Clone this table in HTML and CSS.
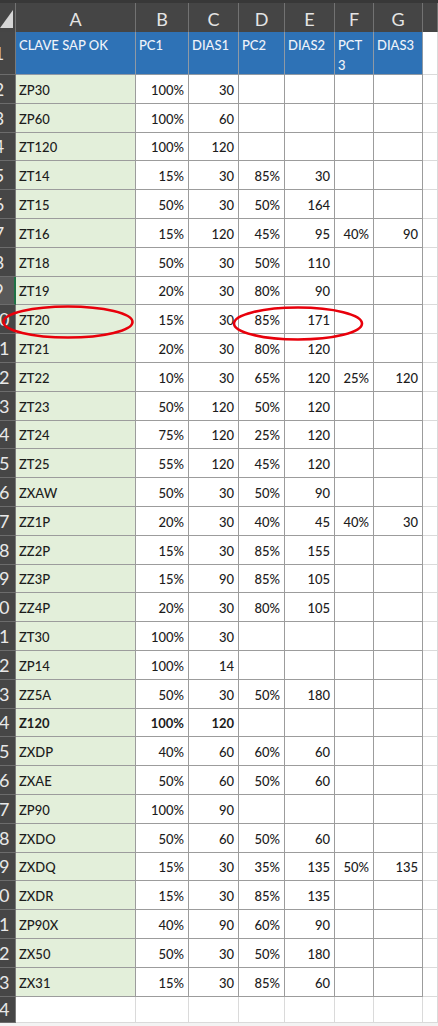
FILE: index.html
```html
<!DOCTYPE html>
<html>
<head>
<meta charset="utf-8">
<link rel="stylesheet" href="styles.css">
</head>
<body>
<div class="wrap">
<div class="sheet">
  <div class="row colhead">
    <div class="corner"><svg width="13" height="18" viewBox="0 0 13 18"><polygon points="0,18 13,0 13,18" fill="#d6d6d6"/></svg></div>
    <div class="ch">A</div><div class="ch">B</div><div class="ch">C</div><div class="ch">D</div><div class="ch">E</div><div class="ch">F</div><div class="ch">G</div><div class="ch"></div>
  </div>
  <div class="row hdr">
    <div class="rh">1</div>
    <div class="c h">CLAVE SAP OK</div><div class="c h">PC1</div><div class="c h">DIAS1</div><div class="c h">PC2</div><div class="c h">DIAS2</div><div class="c h"><span class="mc">PCT 3</span></div><div class="c h">DIAS3</div><div class="c x"></div>
  </div>
  <div class="row"><div class="rh">2</div><div class="c a">ZP30</div><div class="c n">100%</div><div class="c n">30</div><div class="c n"></div><div class="c n"></div><div class="c n"></div><div class="c n"></div><div class="c x"></div></div>
  <div class="row"><div class="rh">3</div><div class="c a">ZP60</div><div class="c n">100%</div><div class="c n">60</div><div class="c n"></div><div class="c n"></div><div class="c n"></div><div class="c n"></div><div class="c x"></div></div>
  <div class="row"><div class="rh">4</div><div class="c a">ZT120</div><div class="c n">100%</div><div class="c n">120</div><div class="c n"></div><div class="c n"></div><div class="c n"></div><div class="c n"></div><div class="c x"></div></div>
  <div class="row"><div class="rh">5</div><div class="c a">ZT14</div><div class="c n">15%</div><div class="c n">30</div><div class="c n">85%</div><div class="c n">30</div><div class="c n"></div><div class="c n"></div><div class="c x"></div></div>
  <div class="row"><div class="rh">6</div><div class="c a">ZT15</div><div class="c n">50%</div><div class="c n">30</div><div class="c n">50%</div><div class="c n">164</div><div class="c n"></div><div class="c n"></div><div class="c x"></div></div>
  <div class="row"><div class="rh">7</div><div class="c a">ZT16</div><div class="c n">15%</div><div class="c n">120</div><div class="c n">45%</div><div class="c n">95</div><div class="c n">40%</div><div class="c n">90</div><div class="c x"></div></div>
  <div class="row"><div class="rh">8</div><div class="c a">ZT18</div><div class="c n">50%</div><div class="c n">30</div><div class="c n">50%</div><div class="c n">110</div><div class="c n"></div><div class="c n"></div><div class="c x"></div></div>
  <div class="row"><div class="rh active">9</div><div class="c a">ZT19</div><div class="c n">20%</div><div class="c n">30</div><div class="c n">80%</div><div class="c n">90</div><div class="c n"></div><div class="c n"></div><div class="c x"></div></div>
  <div class="row"><div class="rh">10</div><div class="c a">ZT20</div><div class="c n">15%</div><div class="c n">30</div><div class="c n">85%</div><div class="c n">171</div><div class="c n"></div><div class="c n"></div><div class="c x"></div></div>
  <div class="row"><div class="rh">11</div><div class="c a">ZT21</div><div class="c n">20%</div><div class="c n">30</div><div class="c n">80%</div><div class="c n">120</div><div class="c n"></div><div class="c n"></div><div class="c x"></div></div>
  <div class="row"><div class="rh">12</div><div class="c a">ZT22</div><div class="c n">10%</div><div class="c n">30</div><div class="c n">65%</div><div class="c n">120</div><div class="c n">25%</div><div class="c n">120</div><div class="c x"></div></div>
  <div class="row"><div class="rh">13</div><div class="c a">ZT23</div><div class="c n">50%</div><div class="c n">120</div><div class="c n">50%</div><div class="c n">120</div><div class="c n"></div><div class="c n"></div><div class="c x"></div></div>
  <div class="row"><div class="rh">14</div><div class="c a">ZT24</div><div class="c n">75%</div><div class="c n">120</div><div class="c n">25%</div><div class="c n">120</div><div class="c n"></div><div class="c n"></div><div class="c x"></div></div>
  <div class="row"><div class="rh">15</div><div class="c a">ZT25</div><div class="c n">55%</div><div class="c n">120</div><div class="c n">45%</div><div class="c n">120</div><div class="c n"></div><div class="c n"></div><div class="c x"></div></div>
  <div class="row"><div class="rh">16</div><div class="c a">ZXAW</div><div class="c n">50%</div><div class="c n">30</div><div class="c n">50%</div><div class="c n">90</div><div class="c n"></div><div class="c n"></div><div class="c x"></div></div>
  <div class="row"><div class="rh">17</div><div class="c a">ZZ1P</div><div class="c n">20%</div><div class="c n">30</div><div class="c n">40%</div><div class="c n">45</div><div class="c n">40%</div><div class="c n">30</div><div class="c x"></div></div>
  <div class="row"><div class="rh">18</div><div class="c a">ZZ2P</div><div class="c n">15%</div><div class="c n">30</div><div class="c n">85%</div><div class="c n">155</div><div class="c n"></div><div class="c n"></div><div class="c x"></div></div>
  <div class="row"><div class="rh">19</div><div class="c a">ZZ3P</div><div class="c n">15%</div><div class="c n">90</div><div class="c n">85%</div><div class="c n">105</div><div class="c n"></div><div class="c n"></div><div class="c x"></div></div>
  <div class="row"><div class="rh">20</div><div class="c a">ZZ4P</div><div class="c n">20%</div><div class="c n">30</div><div class="c n">80%</div><div class="c n">105</div><div class="c n"></div><div class="c n"></div><div class="c x"></div></div>
  <div class="row"><div class="rh">21</div><div class="c a">ZT30</div><div class="c n">100%</div><div class="c n">30</div><div class="c n"></div><div class="c n"></div><div class="c n"></div><div class="c n"></div><div class="c x"></div></div>
  <div class="row"><div class="rh">22</div><div class="c a">ZP14</div><div class="c n">100%</div><div class="c n">14</div><div class="c n"></div><div class="c n"></div><div class="c n"></div><div class="c n"></div><div class="c x"></div></div>
  <div class="row"><div class="rh">23</div><div class="c a">ZZ5A</div><div class="c n">50%</div><div class="c n">30</div><div class="c n">50%</div><div class="c n">180</div><div class="c n"></div><div class="c n"></div><div class="c x"></div></div>
  <div class="row bold"><div class="rh">24</div><div class="c a">Z120</div><div class="c n">100%</div><div class="c n">120</div><div class="c n"></div><div class="c n"></div><div class="c n"></div><div class="c n"></div><div class="c x"></div></div>
  <div class="row"><div class="rh">25</div><div class="c a">ZXDP</div><div class="c n">40%</div><div class="c n">60</div><div class="c n">60%</div><div class="c n">60</div><div class="c n"></div><div class="c n"></div><div class="c x"></div></div>
  <div class="row"><div class="rh">26</div><div class="c a">ZXAE</div><div class="c n">50%</div><div class="c n">60</div><div class="c n">50%</div><div class="c n">60</div><div class="c n"></div><div class="c n"></div><div class="c x"></div></div>
  <div class="row"><div class="rh">27</div><div class="c a">ZP90</div><div class="c n">100%</div><div class="c n">90</div><div class="c n"></div><div class="c n"></div><div class="c n"></div><div class="c n"></div><div class="c x"></div></div>
  <div class="row"><div class="rh">28</div><div class="c a">ZXDO</div><div class="c n">50%</div><div class="c n">60</div><div class="c n">50%</div><div class="c n">60</div><div class="c n"></div><div class="c n"></div><div class="c x"></div></div>
  <div class="row"><div class="rh">29</div><div class="c a">ZXDQ</div><div class="c n">15%</div><div class="c n">30</div><div class="c n">35%</div><div class="c n">135</div><div class="c n">50%</div><div class="c n">135</div><div class="c x"></div></div>
  <div class="row"><div class="rh">30</div><div class="c a">ZXDR</div><div class="c n">15%</div><div class="c n">30</div><div class="c n">85%</div><div class="c n">135</div><div class="c n"></div><div class="c n"></div><div class="c x"></div></div>
  <div class="row"><div class="rh">31</div><div class="c a">ZP90X</div><div class="c n">40%</div><div class="c n">90</div><div class="c n">60%</div><div class="c n">90</div><div class="c n"></div><div class="c n"></div><div class="c x"></div></div>
  <div class="row"><div class="rh">32</div><div class="c a">ZX50</div><div class="c n">50%</div><div class="c n">30</div><div class="c n">50%</div><div class="c n">180</div><div class="c n"></div><div class="c n"></div><div class="c x"></div></div>
  <div class="row"><div class="rh">33</div><div class="c a">ZX31</div><div class="c n">15%</div><div class="c n">30</div><div class="c n">85%</div><div class="c n">60</div><div class="c n"></div><div class="c n"></div><div class="c x"></div></div>
  <div class="row last"><div class="rh">34</div><div class="c x"></div><div class="c x"></div><div class="c x"></div><div class="c x"></div><div class="c x"></div><div class="c x"></div><div class="c x"></div><div class="c x"></div></div>
</div>
<svg class="marks" width="438" height="1026" viewBox="0 0 438 1026">
  <ellipse cx="68" cy="322" rx="64.5" ry="15.5" fill="none" stroke="#e8000b" stroke-width="2.6"/>
  <ellipse cx="298" cy="323.5" rx="64" ry="16" fill="none" stroke="#e8000b" stroke-width="2.6"/>
</svg>
</div>
</body>
</html>
```

FILE: styles.css
```css
html, body {
  margin: 0;
  padding: 0;
  background: #ffffff;
  overflow: hidden;
}
.wrap {
  position: relative;
  width: 438px;
  height: 1026px;
  overflow: hidden;
  background: #f3f3f3;
}
.sheet {
  margin-left: -17px;
  width: 455px;
  font-family: Lato, "Open Sans", sans-serif;
  font-size: 13px;
  color: #1c1c1c;
}
.row {
  display: grid;
  grid-template-columns: 33px 120px 53px 50px 46px 50px 39px 49px 1fr;
  height: 28.8px;
}
.row > div {
  box-sizing: border-box;
  overflow: hidden;
  white-space: nowrap;
}
.colhead {
  height: 32px;
  background: #454545;
  border-top: 3px solid #383838;
  box-sizing: border-box;
}
.corner {
  display: flex;
  justify-content: flex-end;
  align-items: flex-end;
  padding: 0 2px 4px 0;
  border-right: 1px solid #727272;
}
.ch {
  display: flex;
  justify-content: center;
  align-items: center;
  padding-top: 2px;
  font-size: 18px;
  color: #e4e4e4;
  border-right: 1px solid #727272;
}
.hdr {
  height: 43px;
}
.rh {
  display: flex;
  justify-content: center;
  align-items: center;
  background: #464646;
  color: #e8e8e8;
  font-size: 18px;
  font-weight: 400;
  border-right: 1px solid #7a7a7a;
  border-bottom: 1px solid #6c6c6c;
}
.rh.active {
  background: #595959;
  border-right: 2px solid #1e7145;
}
.c {
  display: flex;
  align-items: flex-end;
  padding: 0 4px 5px 4px;
  line-height: 16px;
  font-weight: 500;
  background: #ffffff;
  border-right: 1px solid #9c9c9c;
  border-bottom: 1px solid #9c9c9c;
}
.c.a {
  background: #e3efda;
  padding-left: 3px;
}
.c.n {
  justify-content: flex-end;
}
.c.h {
  align-items: flex-start;
  padding: 3px 4px 0 3px;
  line-height: 20px;
  background: #2e72b6;
  color: #eef3fa;
  white-space: normal;
  border-right: 1px solid #8f99a4;
  border-bottom: 1px solid #8f99a4;
}
.mc {
  width: min-content;
}
.c.x {
  border-right: 1px solid #dadada;
  border-bottom: 1px solid #dadada;
}
.bold .c {
  font-weight: 700;
}
.last {
  height: 26.5px;
}
.marks {
  position: absolute;
  left: 0;
  top: 0;
  pointer-events: none;
}
```
